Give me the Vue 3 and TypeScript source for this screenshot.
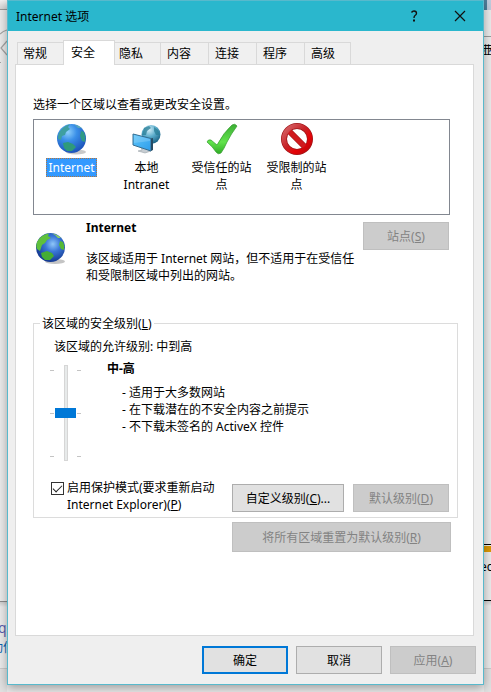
<script setup lang="ts">
import { ref } from 'vue'

interface Zone {
  id: string
  label: string
}

const tabs: string[] = ['常规', '安全', '隐私', '内容', '连接', '程序', '高级']
const activeTab = ref('安全')

const zones: Zone[] = [
  { id: 'internet', label: 'Internet' },
  { id: 'intranet', label: '本地 Intranet' },
  { id: 'trusted', label: '受信任的站点' },
  { id: 'restricted', label: '受限制的站点' },
]
const activeZone = ref('internet')

const level = ref(2)
const protectedMode = ref(true)
const hints: string[] = [
  '适用于大多数网站',
  '在下载潜在的不安全内容之前提示',
  '不下载未签名的 ActiveX 控件',
]
</script>

<template>
  <div class="desktop" lang="zh-CN">
    <div class="backdrop" aria-hidden="true">
      <div class="side left">
        <div class="strip"></div>
        <svg class="back" width="7" height="60" viewBox="0 0 7 60">
          <path d="M0 5Q3 2 7 1M7 12L1 19L7 26" fill="none" stroke="#a5a5a5" stroke-width="1.2" />
          <path d="M0 33.500H1" stroke="#a5a5a5" />
        </svg>
        <div class="edge"></div>
        <span class="link first">ql</span>
        <span class="link second">功信</span>
        <div class="ground"></div>
      </div>
      <div class="side right">
        <div class="photo"></div>
        <div class="rule"></div>
        <div class="bars"></div>
        <span class="cut">业</span>
        <div class="gold"></div>
        <span class="word">ec</span>
        <div class="edge dark"></div>
        <div class="ground"></div>
      </div>
    </div>

    <main class="dialog">
      <header class="titlebar">
        <h1>Internet 选项</h1>
        <button class="cap" type="button" aria-label="帮助">
          <svg width="12" height="12" viewBox="0 0 12 12">
            <path d="M3.500 2.500Q4.500 1 6 1Q8.500 1 8.500 3.200Q8.500 4.500 7 5.500Q6 6.200 6 8" fill="none" stroke="#111" stroke-width="1.400" />
            <rect x="5" y="9.500" width="2" height="2" fill="#111" />
          </svg>
        </button>
        <button class="cap" type="button" aria-label="关闭">
          <svg width="12" height="12" viewBox="0 0 12 12">
            <path d="M1 1L11 11M11 1L1 11" stroke="#111" stroke-width="1.200" />
          </svg>
        </button>
      </header>

      <nav class="tabs" role="tablist">
        <button
          v-for="t in tabs"
          :key="t"
          type="button"
          role="tab"
          class="tab"
          :class="{ active: t === activeTab }"
          :aria-selected="t === activeTab"
          @click="activeTab = t"
        >{{ t }}</button>
      </nav>

      <section class="panel">
        <p class="prompt">选择一个区域以查看或更改安全设置。</p>

        <div class="zones">
          <button
            v-for="z in zones"
            :key="z.id"
            type="button"
            class="zone"
            :class="{ selected: z.id === activeZone }"
            @click="activeZone = z.id"
          >
            <svg v-if="z.id === 'internet'" width="32" height="32" viewBox="0 0 32 32">
              <defs>
                <radialGradient id="seaA" cx="38%" cy="28%" r="75%">
                  <stop offset="0" stop-color="#8fd0fa" />
                  <stop offset=".4" stop-color="#3a8fe8" />
                  <stop offset="1" stop-color="#1a50b8" />
                </radialGradient>
              </defs>
              <ellipse cx="20" cy="29" rx="10" ry="2.500" fill="#c9c9c9" />
              <circle cx="15.500" cy="15.500" r="14.500" fill="url(#seaA)" />
              <path d="M5 7Q9 2 14 1.500L12 4L14 6L10 9L9 12L6 13L5 17L2 16Q1.500 11 5 7Z" fill="#3f9fa0" />
              <path d="M18 1.500Q23 2 26 5L22 5L20 3Z" fill="#5aa7b8" />
              <path d="M25 8L28 9Q30 14 29 19L26 18L24 13Z" fill="#2f9a86" />
              <path d="M7 20L12 19L17 21L20 24L16 28L11 28L8 25Z" fill="#2f9a7a" />
            </svg>
            <svg v-else-if="z.id === 'intranet'" width="32" height="32" viewBox="0 0 32 32">
              <defs>
                <radialGradient id="seaB" cx="40%" cy="25%" r="75%">
                  <stop offset="0" stop-color="#d2edf7" />
                  <stop offset=".5" stop-color="#5aaccb" />
                  <stop offset="1" stop-color="#1b6386" />
                </radialGradient>
                <linearGradient id="scr" x1="0" y1="0" x2="1" y2="1">
                  <stop offset="0" stop-color="#5cc6fb" />
                  <stop offset="1" stop-color="#2f9deb" />
                </linearGradient>
              </defs>
              <circle cx="20" cy="11.500" r="9.500" fill="url(#seaB)" />
              <path d="M13 5L18 3L20 5L16 8L15 12H11ZM23 4L27 7L29 12L25 12L23 8Z" fill="#2a7d96" opacity=".75" />
              <path d="M10 24L15 23L17 27L20 28L14 30L7 28L11 27Z" fill="#c7cdd2" stroke="#8d979d" stroke-width=".5" />
              <path d="M2 11L20 15.500V28L2 22Z" fill="url(#scr)" stroke="#346d91" />
              <path d="M20 15.500L22 15V27L20 28Z" fill="#264b63" />
              <path d="M3 12L19 16V18L3 20Z" fill="#fff" opacity=".18" />
            </svg>
            <svg v-else-if="z.id === 'trusted'" width="32" height="32" viewBox="0 0 32 32">
              <defs>
                <linearGradient id="tick" x1="0" y1="0" x2="0" y2="1">
                  <stop offset="0" stop-color="#3cae35" />
                  <stop offset=".6" stop-color="#62e34c" />
                  <stop offset="1" stop-color="#2fab25" />
                </linearGradient>
              </defs>
              <path d="M1 19Q2 16 5 17L11 22Q18 9 26 2Q29 0 31 3Q25 11 21 19Q18 26 15 30Q12 32 10 29Q7 24 1 19Z" fill="url(#tick)" stroke="#349a2e" stroke-width=".7" />
            </svg>
            <svg v-else width="32" height="32" viewBox="0 0 32 32">
              <defs>
                <linearGradient id="ban" x1="0" y1="0" x2="1" y2="1">
                  <stop offset="0" stop-color="#d8686b" />
                  <stop offset=".45" stop-color="#c72227" />
                  <stop offset=".7" stop-color="#e60206" />
                  <stop offset="1" stop-color="#b40a0d" />
                </linearGradient>
              </defs>
              <circle cx="16" cy="16" r="13" fill="none" stroke="#a01518" stroke-width="6" />
              <path d="M7 7L25 25" stroke="#a01518" stroke-width="6" />
              <path d="M6.500 6.500L25.500 25.500" stroke="#d01a1e" stroke-width="4.600" />
              <circle cx="16" cy="16" r="13" fill="none" stroke="url(#ban)" stroke-width="4.600" />
            </svg>
            <span class="zone-label">{{ z.label }}</span>
          </button>
        </div>

        <div class="info">
          <svg class="info-icon" width="32" height="32" viewBox="0 0 32 32">
            <defs>
              <radialGradient id="seaC" cx="58%" cy="38%" r="65%">
                <stop offset="0" stop-color="#8fc6f8" />
                <stop offset=".4" stop-color="#3b78d8" />
                <stop offset="1" stop-color="#10348c" />
              </radialGradient>
            </defs>
            <ellipse cx="20" cy="29.500" rx="10" ry="2.500" fill="#c4c4c4" />
            <circle cx="15.500" cy="15.500" r="14.500" fill="url(#seaC)" />
            <path d="M4 7Q8 2 14 1.500L13 4L16 6L12 8L10 11L7 13L5 19L2 17Q0 12 4 7Z" fill="#5fc13c" />
            <path d="M17 1.500Q22 2 26 6L23 6L20 3Z" fill="#8fd25d" />
            <path d="M25 9L28 10Q30 14 29 18L26 17L24 13Z" fill="#55b936" />
            <path d="M6 21L12 19L17 21L19 24L15 28L10 28L7 25Z" fill="#45ad33" />
          </svg>
          <div class="info-text">
            <h2>Internet</h2>
            <p>该区域适用于 Internet 网站，但不适用于在受信任和受限制区域中列出的网站。</p>
          </div>
          <button class="btn sites" type="button" disabled>站点(<u>S</u>)</button>
        </div>

        <fieldset class="group">
          <legend>该区域的安全级别(<u>L</u>)</legend>
          <label class="allowed" for="level">该区域的允许级别: 中到高</label>
          <div class="level">
            <div class="slider">
              <div class="ticks"><i></i><i></i><i></i></div>
              <input id="level" v-model.number="level" type="range" min="1" max="3" step="1" />
              <div class="ticks"><i></i><i></i><i></i></div>
            </div>
            <div class="level-text">
              <h3>中-高</h3>
              <ul>
                <li v-for="h in hints" :key="h">- {{ h }}</li>
              </ul>
            </div>
          </div>
          <div class="actions">
            <label class="protect">
              <input v-model="protectedMode" type="checkbox" />
              <span>启用保护模式(要求重新启动<br />Internet Explorer)(<u>P</u>)</span>
            </label>
            <button class="btn custom" type="button">自定义级别(<u>C</u>)...</button>
            <button class="btn default" type="button" disabled>默认级别(<u>D</u>)</button>
          </div>
        </fieldset>

        <button class="btn reset" type="button" disabled>将所有区域重置为默认级别(<u>R</u>)</button>
      </section>

      <footer class="footer">
        <button class="btn primary" type="button">确定</button>
        <button class="btn" type="button">取消</button>
        <button class="btn" type="button" disabled>应用(<u>A</u>)</button>
      </footer>
    </main>
  </div>
</template>

<style>
body {
  margin: 0;
}
</style>

<style scoped>
* {
  box-sizing: border-box;
}

.desktop {
  position: relative;
  display: flex;
  flex-direction: column;
  min-height: 100vh;
  padding: 0 7px 7px;
  overflow: hidden;
  background: #ededed;
  color: #000;
  font: 12px/17px "Noto Sans", "Noto Sans CJK SC", sans-serif;
}

button,
input {
  margin: 0;
  font: inherit;
  color: inherit;
}

h1,
h2,
h3,
p,
ul {
  margin: 0;
  padding: 0;
  font-size: inherit;
  list-style: none;
}

/* Windows that show behind the dialog */
.backdrop {
  position: absolute;
  inset: 0;
}

.side {
  position: absolute;
  top: 0;
  bottom: 0;
  width: 7px;
  overflow: hidden;
}

.side > * {
  position: absolute;
  left: 0;
}

.left {
  left: 0;
}

.right {
  right: 0;
}

.strip {
  top: 0;
  width: 7px;
  height: 10px;
  background: linear-gradient(#f2f2f2, #d5d5d5);
  border-bottom: 1px solid #999;
}

.back {
  top: 29px;
}

.edge {
  top: 601px;
  width: 7px;
  height: 6px;
  border-top: 1px solid #8c8c8c;
  background: linear-gradient(#cfcfcf, #ededed);
}

.edge.dark {
  top: 600px;
  border-color: #000;
}

.link {
  color: #0b63b0;
  white-space: nowrap;
}

.first {
  top: 619px;
  margin-left: -2px;
  color: #5b5fae;
  font-size: 14px;
}

.second {
  top: 639px;
  margin-left: -9px;
}

.ground {
  top: 668px;
  bottom: 0;
  width: 7px;
  border-top: 1px solid #ccc;
  background: #e2e2e2;
}

.photo {
  top: 0;
  width: 7px;
  height: 10px;
  background: linear-gradient(90deg, #4d7f9c 3px, #bfcdde 3px);
}

.rule {
  top: 36px;
  width: 7px;
  height: 1px;
  background: #9c9c9c;
}

.bars {
  top: 45px;
  width: 7px;
  height: 4px;
  border: solid #111;
  border-width: 1px 0;
}

.cut {
  top: 42px;
  margin-left: -3px;
}

.gold {
  top: 544px;
  width: 7px;
  height: 8px;
  border-top: 1px solid #000;
  background: linear-gradient(#eee 1px, #dc9a06 1px);
}

.word {
  top: 558px;
  margin-left: -4px;
}

.dialog {
  position: relative;
  display: flex;
  flex: 1;
  flex-direction: column;
  background: #efefef;
  border: 1px solid #58b9cc;
  box-shadow: 0 3px 10px rgba(0, 0, 0, 0.35);
}

.titlebar {
  display: flex;
  align-items: center;
  height: 30px;
  padding-left: 8px;
  background: #2ab7cd;
}

.titlebar h1 {
  flex: 1;
  font-weight: 400;
}

.cap {
  display: grid;
  place-items: center;
  width: 46px;
  height: 30px;
  padding: 0;
  background: none;
  border: 0;
}

.tabs {
  position: relative;
  display: flex;
  align-items: flex-end;
  height: 33px;
  padding-left: 8px;
}

.tab {
  width: 48px;
  height: 22px;
  padding: 0 0 0 6px;
  text-align: left;
  background: #f0f0f0;
  border: solid #d9d9d9;
  border-width: 1px 0 0 1px;
}

.tab:first-child {
  width: 47px;
  margin-left: 1px;
  padding-left: 5px;
}

.tab:last-child {
  width: 47px;
  border-right-width: 1px;
}

.tab.active {
  position: relative;
  z-index: 1;
  width: 52px;
  height: 25px;
  margin: 0 -3px -1px -1px;
  padding: 0 0 2px 7px;
  background: #fff;
  border-right-width: 1px;
}

.panel {
  flex: 1;
  margin: 0 9px 0 7px;
  padding: 31px 15px 16px 17px;
  background: #fff;
  border: 1px solid #d9d9d9;
}

.zones {
  display: flex;
  margin: 6px 8px 0 0;
  padding: 3px 0 20px;
  border: 1px solid #828790;
}

.zone {
  display: flex;
  flex-direction: column;
  align-items: center;
  width: 75px;
  padding: 0;
  background: none;
  border: 0;
}

.zone-label {
  max-width: 66px;
  margin-top: 3px;
  padding: 1px 2px;
}

.selected .zone-label {
  padding: 0 1px;
  color: #fff;
  background: #3399ff;
  border: 1px dotted #b0763f;
}

.info {
  display: flex;
  align-items: flex-start;
  margin: 4px 9px 0 2px;
}

.info-icon {
  flex: none;
  margin: 13px 19px 0 0;
}

.info-text {
  flex: 1;
}

.info-text p {
  margin-top: 14px;
}

.btn {
  width: 86px;
  height: 28px;
  padding: 0;
  background: #e1e1e1;
  border: 1px solid #adadad;
}

.btn:disabled {
  color: #838383;
  background: #cccccc;
  border-color: #bfbfbf;
}

.btn.primary {
  border: 2px solid #0078d7;
}

u {
  text-underline-offset: 1px;
}

.sites {
  margin: 3px 0 0 7px;
}

.group {
  min-width: 0;
  margin: 31px 0 0;
  padding: 6px 8px 4px 17px;
  border: 1px solid #dcdcdc;
}

.group legend {
  margin-left: -11px;
  padding: 0 2px;
}

.allowed {
  display: block;
  padding-left: 3px;
}

.level {
  display: flex;
  gap: 26px;
  margin-left: -1px;
  padding-top: 5px;
}

.slider {
  display: flex;
  gap: 1px;
  height: 97px;
  margin-top: 5px;
}

.ticks {
  display: flex;
  flex-direction: column;
  justify-content: space-between;
  padding: 5px 0;
}

.ticks i {
  width: 4px;
  height: 1px;
  background: #c4c4c4;
}

.slider input {
  width: 21px;
  height: 96px;
  appearance: none;
  writing-mode: vertical-lr;
  background: linear-gradient(#e7eaea, #e7eaea) center / 2px 94px no-repeat,
    linear-gradient(#d6d6d6, #d6d6d6) center / 4px 96px no-repeat;
}

.slider input::-webkit-slider-thumb {
  width: 21px;
  height: 10px;
  appearance: none;
  background: #0078d7;
  border: 0;
  border-radius: 0;
}

.level-text li {
  padding-left: 15px;
}

.level-text ul {
  margin-top: 7px;
}

.actions {
  display: flex;
  align-items: flex-start;
  margin-top: 17px;
}

.protect {
  display: flex;
  flex: 1;
  gap: 3px;
  white-space: nowrap;
}

.protect input {
  flex: none;
  width: 13px;
  height: 13px;
  margin-top: 3px;
  appearance: none;
  background: #fff;
  border: 1px solid #333;
}

.protect input:checked::before {
  display: block;
  width: 8px;
  height: 4px;
  margin: 2px 1px;
  border: solid #222;
  border-width: 0 0 1px 1px;
  transform: rotate(-45deg);
  content: "";
}

.actions .btn {
  margin-top: 5px;
}

.btn.custom {
  width: 112px;
  margin-right: 9px;
}

.btn.default {
  width: 96px;
}

.btn.reset {
  display: block;
  width: 219px;
  height: 30px;
  margin: 4px 7px 0 auto;
}

.footer {
  display: flex;
  justify-content: flex-end;
  gap: 8px;
  padding: 10px 7px;
}
</style>
